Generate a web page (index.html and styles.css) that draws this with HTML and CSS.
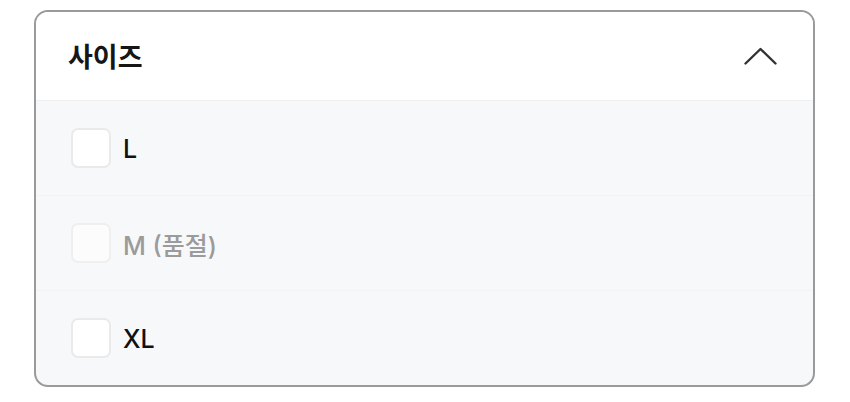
FILE: index.html
```html
<!DOCTYPE html>
<html lang="ko">
<head>
<meta charset="utf-8">
<link rel="stylesheet" href="styles.css">
</head>
<body>
<div class="card">
  <div class="head">
    <span class="title">사이즈</span>
    <svg class="chev" width="33" height="18" viewBox="0 0 33 18"><path d="M1.5 16.5 L16.5 2 L31.5 16.5" fill="none" stroke="#333" stroke-width="2.4" stroke-linecap="round" stroke-linejoin="round"/></svg>
  </div>
  <div class="list">
    <label class="row"><span class="box"></span><span class="lbl">L</span></label>
    <label class="row off"><span class="box"></span><span class="lbl">M (품절)</span></label>
    <label class="row"><span class="box"></span><span class="lbl">XL</span></label>
  </div>
</div>
</body>
</html>
```
FILE: styles.css
```css
html, body {
  margin: 0;
  padding: 0;
  background: #ffffff;
}
body {
  padding: 10px 0 0 34px;
  font-family: "Inter", "Noto Sans CJK KR", sans-serif;
}
.card {
  width: 777px;
  height: 373px;
  border: 2px solid #9a9a9a;
  border-radius: 14px;
  overflow: hidden;
  display: flex;
  flex-direction: column;
  background: #f7f8fa;
}
.head {
  height: 88px;
  flex: none;
  background: #ffffff;
  border-bottom: 1px solid #eef0f2;
  display: flex;
  align-items: center;
  justify-content: space-between;
  padding: 0 36px 0 32px;
}
.title {
  font-family: "Noto Sans CJK KR", sans-serif;
  font-weight: 700;
  font-size: 27px;
  color: #161616;
  letter-spacing: 0;
  margin-top: -2px;
}
.chev {
  display: block;
}
.list {
  flex: 1;
  display: flex;
  flex-direction: column;
}
.row {
  height: 94px;
  flex: none;
  display: flex;
  align-items: center;
  padding-left: 35px;
  gap: 12px;
  border-bottom: 1px solid #f2f3f5;
}
.row:last-child {
  border-bottom: none;
  flex: 1;
}
.box {
  width: 36px;
  height: 36px;
  border: 2px solid #e9eaec;
  border-radius: 7px;
  background: #ffffff;
  flex: none;
}
.lbl {
  font-size: 25px;
  font-weight: 500;
  color: #111111;
  margin-top: 2px;
}
.row.off .lbl {
  color: #9b9b9b;
}
.row.off .box {
  background: #fcfcfd;
  border-color: #eeeff1;
}
```
